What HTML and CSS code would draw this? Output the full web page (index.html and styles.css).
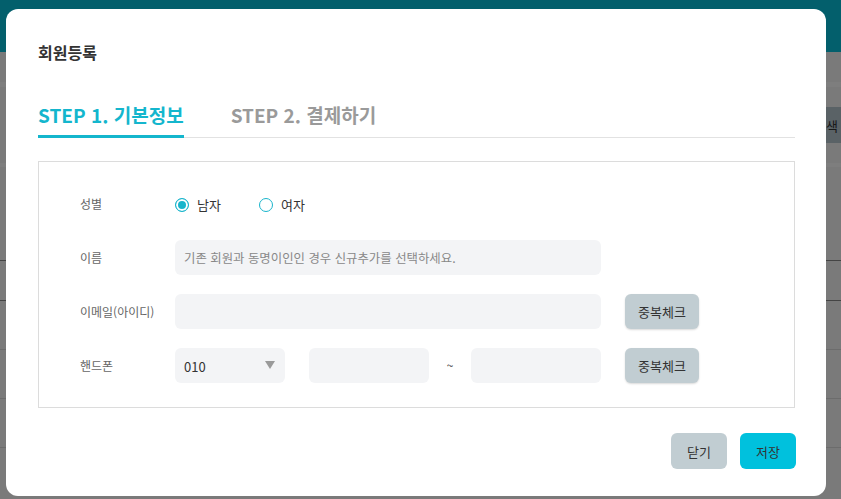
FILE: index.html
```html
<!DOCTYPE html>
<html lang="ko">
<head>
  <meta charset="UTF-8"/>
  <meta name="viewport" content="width=device-width, initial-scale=1.0"/>
  <title>회원관리</title>
  <link rel="stylesheet" href="styles.css">
</head>
<body>
  <div class="page">
    <header class="topbar"></header>
    <div class="page-top"></div>
    <div class="page-band"></div>
    <section class="search-panel">
      <button class="search-btn">검색</button>
    </section>
    <div class="page-band thin"></div>
    <section class="list-panel">
      <div class="list-head"></div>
      <table class="member-table">
        <thead>
          <tr><th>번호</th><th>이름</th><th>이메일</th><th>핸드폰</th></tr>
        </thead>
        <tbody>
          <tr><td></td><td></td><td></td><td></td></tr>
          <tr><td></td><td></td><td></td><td></td></tr>
          <tr><td></td><td></td><td></td><td></td></tr>
        </tbody>
      </table>
    </section>
  </div>

  <!-- 회원등록 모달 -->
  <div class="modal-overlay">
    <div class="modal">
      <h2 class="modal-title">회원등록</h2>
      <ul class="steps">
        <li class="step active">STEP 1. 기본정보</li>
        <li class="step">STEP 2. 결제하기</li>
      </ul>

      <div class="form-box">
        <div class="form-row">
          <span class="form-label">성별</span>
          <div class="radios">
            <label class="radio"><input type="radio" name="gender" checked/>남자</label>
            <label class="radio"><input type="radio" name="gender"/>여자</label>
          </div>
        </div>
        <div class="form-row">
          <label class="form-label" for="userName">이름</label>
          <input type="text" id="userName" class="input input-wide" placeholder="기존 회원과 동명이인인 경우 신규추가를 선택하세요."/>
        </div>
        <div class="form-row">
          <label class="form-label" for="userEmail">이메일(아이디)</label>
          <input type="text" id="userEmail" class="input input-wide"/>
          <button class="btn btn-check">중복체크</button>
        </div>
        <div class="form-row">
          <label class="form-label" for="phoneHead">핸드폰</label>
          <div class="select-wrap">
            <select id="phoneHead" class="select">
              <option>010</option>
              <option>011</option>
              <option>016</option>
            </select>
          </div>
          <input type="text" class="input input-mid"/>
          <span class="tilde">~</span>
          <input type="text" class="input input-last"/>
          <button class="btn btn-check">중복체크</button>
        </div>
      </div>

      <div class="modal-footer">
        <button class="btn btn-gray">닫기</button>
        <button class="btn btn-primary">저장</button>
      </div>
    </div>
  </div>
</body>
</html>
```

FILE: styles.css
```css
html, body {
  margin: 0; padding: 0; height: 100%; overflow: hidden;
}
body {
  font-family: "Noto Sans CJK KR", "Noto Sans", sans-serif;
  background-color: #f4f4f4; color: #333;
}

/* background page */
.page { min-width: 880px; }
.topbar { height: 52px; background-color: #06bed8; }
.page-top { height: 30px; background-color: #f4f4f4; }
.page-band { height: 5px; background-color: #fcfcfc; }
.page-band.thin { height: 4px; }
.search-panel {
  display: flex; justify-content: flex-end;
  padding: 20px 24px; background-color: #f4f4f4;
}
.search-btn {
  width: 60px; height: 36px; border: none; border-radius: 4px;
  background-color: #b4c4cc; color: #333;
  font-family: inherit; font-size: 13px;
}
.list-panel { background-color: #f4f4f4; }
.list-head { height: 93px; }
.member-table { width: 100%; border-collapse: collapse; }
.member-table th {
  height: 39px; padding: 0; border-top: 1px solid #888; border-bottom: 1px solid #888;
  font-size: 13px; font-weight: normal; color: #333;
}
.member-table td { height: 48px; padding: 0; border-bottom: 1px solid #d8d8d8; }

/* modal */
.modal-overlay {
  position: fixed; top: 0; left: 0; width: 100%; height: 100%;
  background-color: rgba(0, 0, 0, 0.5);
}
.modal {
  position: absolute; top: 9px; left: 6px;
  width: 820px; box-sizing: border-box;
  padding: 32px 30px 27px 32px;
  background-color: #fff; border-radius: 12px;
}
.modal-title {
  margin: 0 0 38px; font-size: 16px; line-height: 22px;
  font-weight: 700; color: #333;
}
.steps {
  display: flex; gap: 47px; list-style: none;
  margin: 0 1px 0 0; padding: 0; border-bottom: 1px solid #e2e2e2;
}
.step {
  font-size: 19px; line-height: 28px; font-weight: 700; color: #9a9a9a;
  padding-bottom: 6px; margin-bottom: -1px;
  border-bottom: 3px solid transparent;
}
.step.active { color: #14b6cd; border-bottom-color: #14b6cd; }

.form-box {
  margin: 23px 1px 0 0; border: 1px solid #dcdcdc;
  padding: 24px 40px 24px 41px;
  display: flex; flex-direction: column; gap: 19px;
}
.form-row { display: flex; align-items: center; height: 35px; }
.form-label { flex: none; width: 95px; font-size: 12px; color: #666; }

.radios { display: flex; gap: 38px; padding-top: 2px; }
.radio { display: flex; align-items: center; font-size: 13px; color: #333; }
.radio input {
  appearance: none; -webkit-appearance: none;
  width: 14px; height: 14px; margin: 0 8px 0 0;
  border: 1.5px solid #19b5cc; border-radius: 50%;
  box-sizing: border-box; background: #fff;
}
.radio input:checked { background: #19b5cc; box-shadow: inset 0 0 0 2px #fff; }

.input {
  height: 35px; box-sizing: border-box; border: none; outline: none;
  border-radius: 6px; background-color: #f3f4f6;
  padding: 0 9px; font-family: inherit; font-size: 12.4px; color: #333;
}
.input::placeholder { color: #888; }
.input-wide { width: 426px; }
.input-mid { width: 120px; margin-left: 24px; }
.input-last { width: 130px; }
.tilde {
  width: 42px; text-align: center; font-size: 12px; color: #444;
  margin-top: -3px;
}

.select-wrap { position: relative; width: 110px; }
.select-wrap::after {
  content: ""; position: absolute; right: 10px; top: 13px;
  border-left: 5px solid transparent; border-right: 5px solid transparent;
  border-top: 8px solid #9a9a9a;
}
.select {
  appearance: none; -webkit-appearance: none;
  width: 100%; height: 35px; border: none; outline: none;
  border-radius: 6px; background-color: #f3f4f6;
  padding: 2px 9px 0; font-family: inherit; font-size: 13px; color: #333;
}

.btn {
  border: none; border-radius: 6px; cursor: pointer;
  font-family: inherit; font-size: 13px; color: #333;
}
.btn-check {
  width: 74px; height: 35px; margin-left: 24px;
  background-color: #c1cdd2; box-shadow: 0 1px 2px rgba(0, 0, 0, 0.15);
}
.modal-footer {
  display: flex; justify-content: flex-end; gap: 13px; margin-top: 25px;
}
.btn-gray, .btn-primary { width: 56px; height: 36px; }
.btn-gray { background-color: #c1cdd2; }
.btn-primary { background-color: #00c1dd; }
```
